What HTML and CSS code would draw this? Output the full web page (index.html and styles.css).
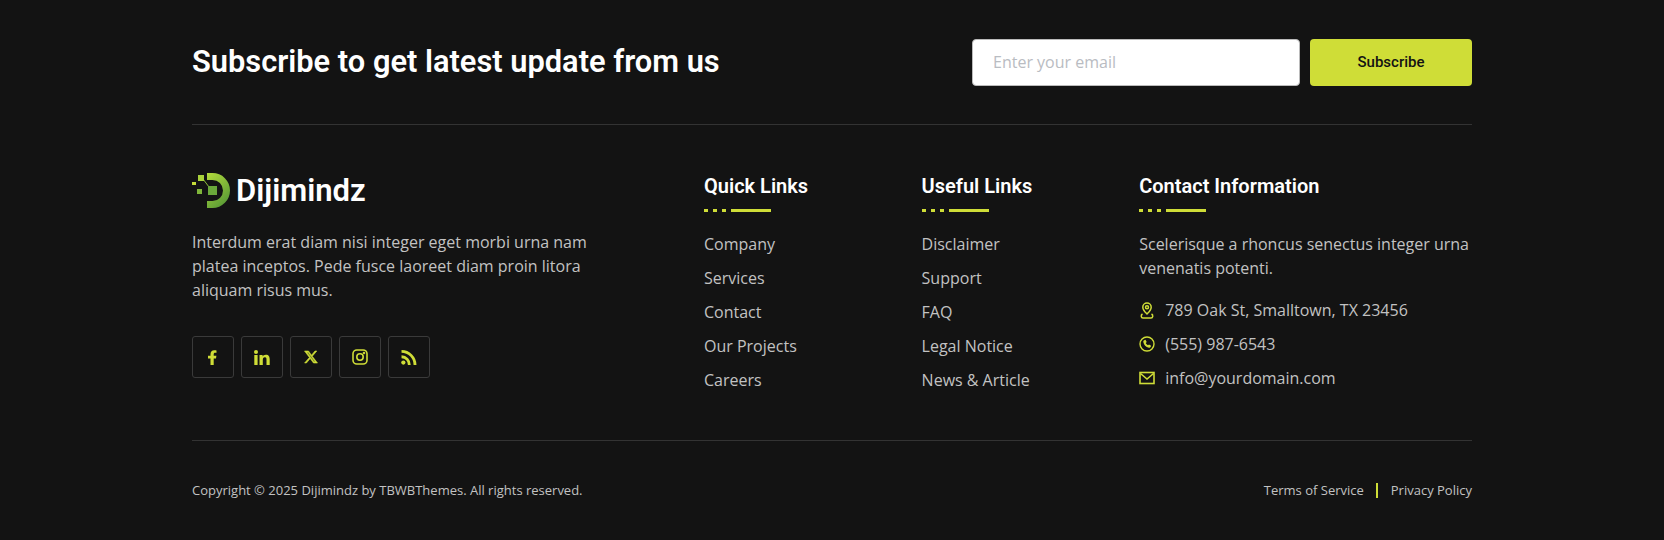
FILE: index.html
```html
<!DOCTYPE html>
<html lang="en">
<head>
    <meta charset="UTF-8">
    <meta name="viewport" content="width=device-width, initial-scale=1.0">
    <title>Dijimindz Footer</title>
    <link rel="stylesheet" href="styles.css">
</head>
<body>

<footer class="footer">
    <div class="subscribe">
        <h2>Subscribe to get latest update from us</h2>
        <form class="subscribe-form">
            <input type="email" placeholder="Enter your email">
            <button type="button">Subscribe</button>
        </form>
    </div>

    <div class="footer-main">
        <div class="brand">
            <div class="logo">
                <svg width="39" height="35" viewBox="0 0 39 35">
                    <defs>
                        <linearGradient id="logoGrad" x1="0" y1="0" x2="0.6" y2="1">
                            <stop offset="0" stop-color="#b4db3c"/>
                            <stop offset="1" stop-color="#5b9c36"/>
                        </linearGradient>
                    </defs>
                    <path d="M15 0h5.500a17.500 17.500 0 0 1 0 35H15v-7h5.500a10.500 10.500 0 0 0 0-21H15z" fill="url(#logoGrad)"/>
                    <path d="M11 6l6 8" stroke="#8dbf3a" stroke-width="1"/>
                    <rect x="16" y="13" width="9" height="9" fill="#6aa83a"/>
                    <rect x="6" y="2" width="6" height="6" fill="#a9d23b"/>
                    <rect x="5" y="16" width="5" height="5" fill="#7fb53a"/>
                    <rect x="0" y="9" width="4" height="3" fill="#c5dc3a"/>
                </svg>
                <span>Dijimindz</span>
            </div>
            <p>Interdum erat diam nisi integer eget morbi urna nam platea inceptos. Pede fusce laoreet diam proin litora aliquam risus mus.</p>
            <div class="social">
                <a href="#"><svg width="10" height="15" viewBox="0 0 10 15"><path d="M2.500 15V8.500H0V5.700h2.500V4C2.500 1.500 4 .2 6.200 .2c1 0 2.300.2 2.300.2v2.400H7.200c-1.100 0-1.500.7-1.500 1.400v1.500h2.700l-.4 2.800H5.700V15z"/></svg></a>
                <a href="#"><svg width="16" height="15" viewBox="0 0 16 15"><rect x="0.300" y="5" width="3.300" height="10"/><circle cx="2" cy="2" r="2"/><path d="M5.500 5h3.100v1.400c.5-.9 1.700-1.700 3.200-1.700 3.200 0 3.900 2.100 3.900 4.800V15h-3.200V10c0-1.300 0-2.700-1.600-2.700S8.800 8.600 8.800 10v5H5.500z"/></svg></a>
                <a href="#"><svg width="14" height="14" viewBox="0 0 14 14"><path d="M0.500 1h4l3 4.200L11 1h1.800L8.300 6.300 13.500 13h-4L6.200 8.500 2.400 13H.6l4.800-5.600zM3 2.200l7.100 9.600h1L4 2.200z" stroke="currentColor" stroke-width=".6"/></svg></a>
                <a href="#"><svg width="16" height="16" viewBox="0 0 16 16" fill="none" stroke="currentColor" stroke-width="1.600"><rect x="1" y="1" width="14" height="14" rx="3.800"/><circle cx="8" cy="8" r="3.200"/><circle cx="12" cy="4" r=".5"/></svg></a>
                <a href="#"><svg width="16" height="15" viewBox="0 0 15 14"><circle cx="2.200" cy="11.800" r="2"/><path d="M0.500 5v2.600a6 6 0 0 1 6 6.400h2.600A8.700 8.700 0 0 0 .5 5z"/><path d="M0.500 0v2.600A11.300 11.300 0 0 1 11.800 14h2.700A14 14 0 0 0 .5 0z"/></svg></a>
            </div>
        </div>

        <div class="links">
            <h3>Quick Links</h3>
            <ul>
                <li>Company</li>
                <li>Services</li>
                <li>Contact</li>
                <li>Our Projects</li>
                <li>Careers</li>
            </ul>
        </div>

        <div class="links">
            <h3>Useful Links</h3>
            <ul>
                <li>Disclaimer</li>
                <li>Support</li>
                <li>FAQ</li>
                <li>Legal Notice</li>
                <li>News &amp; Article</li>
            </ul>
        </div>

        <div class="links">
            <h3>Contact Information</h3>
            <p class="contact-text">Scelerisque a rhoncus senectus integer urna venenatis potenti.</p>
            <div class="contact-row">
                <svg width="16" height="17" viewBox="0 0 16 17" fill="none" stroke="currentColor" stroke-width="1.500"><path d="M8 12C5.800 9.800 3.800 8 3.800 5.200a4.200 4.200 0 0 1 8.400 0C12.200 8 10.200 9.800 8 12z"/><circle cx="8" cy="5.200" r="1.500"/><path d="M3.500 12c-2 1.200-1.500 4 .5 4h8c2 0 2.500-2.800.5-4"/></svg>
                <span>789 Oak St, Smalltown, TX 23456</span>
            </div>
            <div class="contact-row">
                <svg width="16" height="16" viewBox="0 0 16 16" fill="none" stroke="currentColor" stroke-width="1.400"><circle cx="8" cy="8" r="7"/><path d="M5.200 4.200l1.300-.4 1.200 2.300-.9 1c.4 1 1.200 1.800 2.200 2.200l1-.9 2.100 1.300-.5 1.400c-.3.6-1 .9-1.700.7C6.800 11 4.800 9 4.300 6c-.1-.8.2-1.500.9-1.800z" fill="currentColor" stroke="none"/></svg>
                <span>(555) 987-6543</span>
            </div>
            <div class="contact-row">
                <svg width="16" height="16" viewBox="0 0 16 16" fill="none" stroke="currentColor" stroke-width="1.600"><rect x="1" y="2.500" width="14" height="11"/><path d="M1.500 3.500L8 9l6.500-5.500"/></svg>
                <span>info@yourdomain.com</span>
            </div>
        </div>
    </div>

    <div class="footer-bottom">
        <span>Copyright © 2025 Dijimindz by TBWBThemes. All rights reserved.</span>
        <div class="legal">
            <span>Terms of Service</span>
            <span class="legal-sep"></span>
            <span>Privacy Policy</span>
        </div>
    </div>
</footer>

</body>
</html>
```

FILE: styles.css
```css
body {
    font-family: "Open Sans", sans-serif;
    background-color: #131313;
    color: #c2c2c2;
    margin: 0;
    padding: 0;
}
h2, h3, p, ul {
    margin: 0;
    padding: 0;
}
.footer {
    width: 1280px;
    margin: 0 auto;
}
.subscribe {
    display: flex;
    justify-content: space-between;
    align-items: center;
    padding: 39px 0 38px;
    border-bottom: 1px solid #333;
}
.subscribe h2 {
    font-family: "Roboto", sans-serif;
    font-size: 30.8px;
    font-weight: 600;
    color: #fff;
    padding-bottom: 2px;
}
.subscribe-form {
    display: flex;
    gap: 10px;
}
.subscribe-form input {
    width: 328px;
    height: 47px;
    box-sizing: border-box;
    padding: 0 20px 2px;
    font-family: "Open Sans", sans-serif;
    font-size: 16px;
    background-color: #fff;
    border: 1px solid #bbb;
    border-radius: 4px;
}
.subscribe-form input::placeholder {
    color: #b9bcc2;
}
.subscribe-form button {
    width: 162px;
    height: 47px;
    padding: 0 0 2px;
    font-family: "Roboto", sans-serif;
    font-size: 15px;
    font-weight: 500;
    color: #131313;
    background-color: #cfdd37;
    border: none;
    border-radius: 4px;
}
.footer-main {
    display: grid;
    grid-template-columns: 40% 17% 17% 26%;
    padding: 48px 0 43px;
    border-bottom: 1px solid #333;
}
.logo {
    display: flex;
    align-items: center;
    gap: 5px;
    height: 35px;
}
.logo span {
    font-family: "Roboto", sans-serif;
    font-size: 31px;
    font-weight: 600;
    color: #fff;
}
.brand p {
    width: 400px;
    margin-top: 22px;
    font-size: 16px;
    line-height: 24px;
}
.social {
    display: flex;
    gap: 7px;
    margin-top: 34px;
}
.social a {
    display: flex;
    align-items: center;
    justify-content: center;
    width: 40px;
    height: 40px;
    border: 1px solid #3a3a3a;
    border-radius: 3px;
    color: #cfdd37;
    fill: currentColor;
}
.links h3 {
    position: relative;
    font-family: "Roboto", sans-serif;
    font-size: 20px;
    font-weight: 600;
    line-height: 26px;
    color: #fff;
    padding-bottom: 13px;
    margin-bottom: 15px;
}
/* dotted + solid underline under the column title */
.links h3::after {
    content: "";
    position: absolute;
    left: 0;
    bottom: 0;
    width: 67px;
    height: 3px;
    background: linear-gradient(to right, #cfdd37 4px, transparent 4px 9px, #cfdd37 9px 13px, transparent 13px 18px, #cfdd37 18px 22px, transparent 22px 27px, #cfdd37 27px);
}
.links ul {
    list-style: none;
}
.links li {
    font-size: 16px;
    line-height: 34px;
}
.contact-text {
    font-size: 16px;
    line-height: 24px;
    margin-bottom: 13px;
    padding-top: 5px;
}
.contact-row {
    display: flex;
    align-items: center;
    gap: 10px;
    height: 34px;
    font-size: 16px;
}
.contact-row svg {
    color: #cfdd37;
}
.footer-bottom {
    display: flex;
    justify-content: space-between;
    align-items: center;
    padding-top: 40px;
    font-size: 13px;
}
.legal {
    display: flex;
    align-items: center;
    gap: 12.5px;
}
.legal-sep {
    width: 2px;
    height: 15px;
    background-color: #cfdd37;
}
```
